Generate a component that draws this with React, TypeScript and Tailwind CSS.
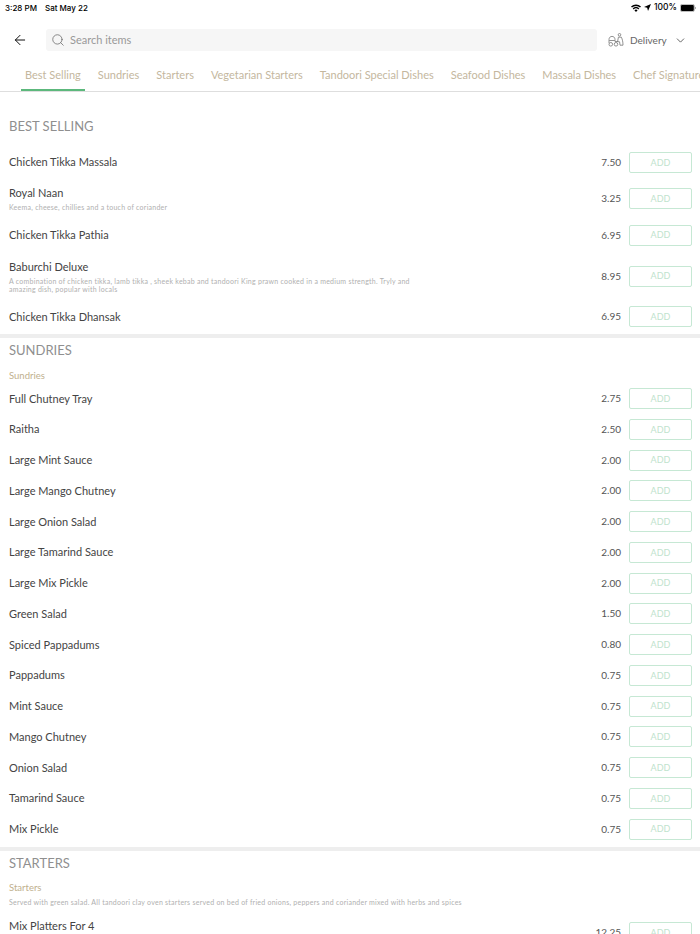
import { ArrowLeft, ChevronDown, Search } from "lucide-react";

type Item = { name: string; price: string; desc?: string; rowClass?: string; spacer?: boolean };

const tabs = [
  "Best Selling",
  "Sundries",
  "Starters",
  "Vegetarian Starters",
  "Tandoori Special Dishes",
  "Seafood Dishes",
  "Massala Dishes",
  "Chef Signature Dishes",
];

const bestSelling: Item[] = [
  { name: "Chicken Tikka Massala", price: "7.50" },
  {
    name: "Royal Naan",
    price: "3.25",
    desc: "Keema, cheese, chillies and a touch of coriander",
    rowClass: "h-[42px]",
  },
  { name: "Chicken Tikka Pathia", price: "6.95" },
  {
    name: "Baburchi Deluxe",
    price: "8.95",
    desc: "A combination of chicken tikka, lamb tikka , sheek kebab and tandoori King prawn cooked in a medium strength. Tryly and amazing dish, popular with locals",
    rowClass: "h-[51px]",
  },
  { name: "Chicken Tikka Dhansak", price: "6.95" },
];

const sundries: Item[] = [
  { name: "Full Chutney Tray", price: "2.75" },
  { name: "Raitha", price: "2.50" },
  { name: "Large Mint Sauce", price: "2.00" },
  { name: "Large Mango Chutney", price: "2.00" },
  { name: "Large Onion Salad", price: "2.00" },
  { name: "Large Tamarind Sauce", price: "2.00" },
  { name: "Large Mix Pickle", price: "2.00" },
  { name: "Green Salad", price: "1.50" },
  { name: "Spiced Pappadums", price: "0.80" },
  { name: "Pappadums", price: "0.75" },
  { name: "Mint Sauce", price: "0.75" },
  { name: "Mango Chutney", price: "0.75" },
  { name: "Onion Salad", price: "0.75" },
  { name: "Tamarind Sauce", price: "0.75" },
  { name: "Mix Pickle", price: "0.75" },
];

function StatusBar() {
  return (
    <div className="h-[14px] pt-[1px] flex items-center justify-between pl-[5px] pr-[4px] text-[8px] font-medium text-black font-['Inter',sans-serif]">
      <div className="flex gap-[8px]">
        <span>3:28 PM</span>
        <span>Sat May 22</span>
      </div>
      <div className="flex items-center gap-[3px]">
        <svg width="10" height="8" viewBox="0 0 10 8" fill="black">
          <path d="M5 8 3.4 6.2a2.3 2.3 0 0 1 3.2 0ZM2.7 5.4 1.7 4.3a4.8 4.8 0 0 1 6.6 0l-1 1.1a3.4 3.4 0 0 0-4.6 0ZM1 3.5 0 2.4a7.3 7.3 0 0 1 10 0L9 3.5a5.9 5.9 0 0 0-8 0Z" />
        </svg>
        <svg width="7" height="7" viewBox="0 0 8 8" fill="black">
          <path d="M8 0 4.6 8 3.6 4.4 0 3.4Z" />
        </svg>
        <span className="text-[8.5px]">100%</span>
        <svg width="16" height="8" viewBox="0 0 16 8">
          <rect x="0.4" y="0.4" width="14" height="7.2" rx="1.6" fill="none" stroke="#999" strokeWidth="0.7" />
          <rect x="1" y="1" width="12.8" height="6" rx="1" fill="black" />
          <path d="M15 2.8c.6.2 1 .6 1 1.2s-.4 1-1 1.2Z" fill="#999" />
        </svg>
      </div>
    </div>
  );
}

function ScooterIcon() {
  return (
    <svg width="16" height="14" viewBox="0 0 16 14" fill="none" stroke="#777" strokeWidth="0.8">
      <circle cx="2.8" cy="11.3" r="1.8" />
      <circle cx="8" cy="11.3" r="1.8" />
      <path d="M1 10V6.5C1 4.5 2.4 3.4 4 3.4S7 4.5 7 6.5V8.5H10" />
      <path d="M1.2 7.5H6.8" />
      <circle cx="11.5" cy="1.8" r="1.3" />
      <path d="M10.4 4.2 9.6 8.6 11.6 8.8 12 12.2H15C15 9 14.4 6.4 13.4 4.2Z" />
    </svg>
  );
}

function Header() {
  return (
    <div className="h-[36px] mt-[14px] flex items-start">
      <button className="w-[46px] h-[24px] flex items-center justify-center text-[#111] pr-[6px]">
        <ArrowLeft size={16} strokeWidth={1.5} />
      </button>
      <div className="w-[551px] h-[22px] mt-[1px] bg-[#f6f6f6] rounded-[3px] flex items-center pl-[5px] gap-[5px] text-[#999]">
        <Search size={14} strokeWidth={1.3} className="text-[#666]" />
        <span className="text-[11px]">Search items</span>
      </div>
      <div className="ml-[11px] h-[24px] flex items-center text-[#666]">
        <ScooterIcon />
        <span className="ml-[6px] text-[10px]">Delivery</span>
        <ChevronDown size={13} strokeWidth={1.5} className="ml-[7px] text-[#444]" />
      </div>
    </div>
  );
}

function Tabs() {
  return (
    <div className="h-[28px] flex border-b border-[#dedede] pl-[21px] gap-[9px] overflow-hidden whitespace-nowrap">
      {tabs.map((t, i) => (
        <div
          key={t}
          className={`h-[27px] px-[4px] pt-[3px] text-[11px] leading-[16px] text-[#c4b79e] shrink-0 border-b-2 ${
            i === 0 ? "border-[#5cb87c]" : "border-transparent"
          }`}
        >
          {t}
        </div>
      ))}
    </div>
  );
}

function Row({ item }: { item: Item }) {
  return (
    <div className={`flex items-center pl-[9px] pr-[8px] ${item.rowClass ?? "h-[30.75px]"}`}>
      <div className="flex-1 min-w-0">
        <div className="text-[11px] leading-[14px] text-[#444]">{item.name}</div>
        {item.desc && (
          <div className="mt-[3px] max-w-[412px] text-[7px] leading-[8px] tracking-[0.25px] text-[#b0b0b0]">{item.desc}</div>
        )}
        {item.spacer && <div className="h-[14px]" />}
      </div>
      <div className="text-[10px] text-[#555] mr-[8px]">{item.price}</div>
      <button className="w-[63px] h-[21px] shrink-0 border border-[#c6e8d4] rounded-[2px] text-[9px] text-[#bfe3cd] flex items-center justify-center">
        ADD
      </button>
    </div>
  );
}

function Heading({ children }: { children: string }) {
  return <div className="pl-[9px] text-[13px] leading-[16px] text-[#8f8f8f]">{children}</div>;
}

export default function App() {
  return (
    <div className="w-[700px] h-[934px] overflow-hidden bg-white font-['Lato',sans-serif]">
      <StatusBar />
      <Header />
      <Tabs />

      <div className="pt-[26px]">
        <Heading>BEST SELLING</Heading>
        <div className="mt-[13px]">
          {bestSelling.map((it) => (
            <Row key={it.name} item={it} />
          ))}
        </div>
      </div>

      <div className="mt-[2px] h-[4px] bg-[#eeeeee]" />

      <div className="pt-[4px]">
        <Heading>SUNDRIES</Heading>
        <div className="pl-[9px] mt-[12px] text-[9.5px] leading-[12px] text-[#c0b08e]">Sundries</div>
        <div className="mt-[1px]">
          {sundries.map((it) => (
            <Row key={it.name} item={it} />
          ))}
        </div>
      </div>

      <div className="mt-[2px] h-[4px] bg-[#eeeeee]" />

      <div className="pt-[4px]">
        <Heading>STARTERS</Heading>
        <div className="pl-[9px] mt-[11px] text-[9.5px] leading-[12px] text-[#c0b08e]">Starters</div>
        <div className="pl-[9px] mt-[2px] text-[7px] leading-[12px] tracking-[0.25px] text-[#b0b0b0]">
          Served with green salad. All tandoori clay oven starters served on bed of fried onions, peppers and coriander mixed with herbs and spices
        </div>
        <div className="mt-[4px]">
          <Row item={{ name: "Mix Platters For 4", price: "12.25", rowClass: "h-[42px]", spacer: true }} />
        </div>
      </div>
    </div>
  );
}
